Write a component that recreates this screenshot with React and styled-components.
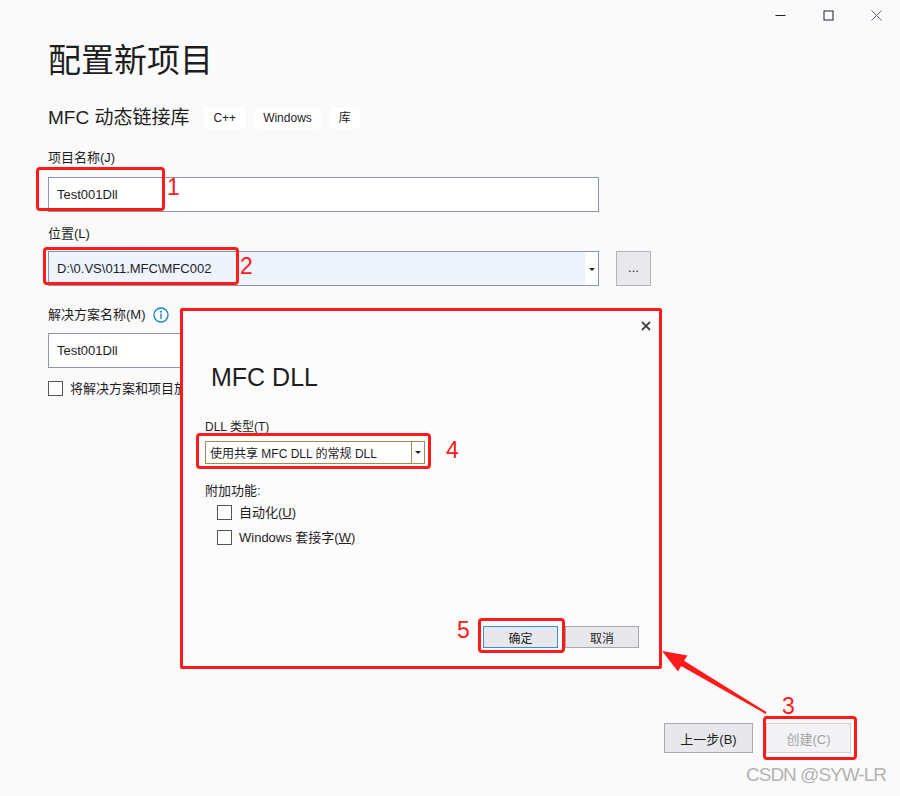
import styled, { createGlobalStyle } from "styled-components";

const GlobalStyle = createGlobalStyle`
  body {
    margin: 0;
    background: #fafafa;
    font-family: "Liberation Sans", "Noto Sans CJK SC", sans-serif;
  }
`;

const Window = styled.div`
  position: relative;
  width: 900px;
  height: 796px;
  overflow: hidden;
  display: flex;
  flex-direction: column;
  background: #fafafa;
  color: #1e1e1e;
`;

const TitleBar = styled.div`
  display: flex;
  justify-content: flex-end;
  height: 31px;
`;

const CtrlButton = styled.div`
  width: 48px;
  height: 31px;
  display: flex;
  align-items: center;
  justify-content: center;
  color: ${(p) => (p.$muted ? "#5a6276" : "#1b2235")};
`;

const Main = styled.main`
  flex: 1;
  padding-left: 48px;
  display: flex;
  flex-direction: column;
`;

const PageTitle = styled.h1`
  margin: 10px 0 0;
  font-size: 33px;
  line-height: 40px;
  font-weight: 400;
  color: #1e1e1e;
`;

const SubRow = styled.div`
  display: flex;
  align-items: center;
  gap: 9px;
  height: 22px;
  margin-top: 26px;
`;

const SubTitle = styled.span`
  font-size: 19px;
  line-height: 22px;
  margin-right: 6px;
`;

const Tag = styled.span`
  background: #fff;
  border-radius: 4px;
  font-size: 12px;
  height: 21px;
  line-height: 21px;
  padding: 0 9px;
  color: #1e1e1e;
`;

const Field = styled.div`
  display: flex;
  flex-direction: column;
  gap: ${(p) => p.$gap}px;
  margin-top: ${(p) => p.$top}px;
`;

const Label = styled.label`
  display: flex;
  align-items: center;
  gap: 7px;
  font-size: 13px;
  line-height: 18px;
  color: #1e1e1e;
`;

const TextBox = styled.div`
  width: 551px;
  height: 35px;
  box-sizing: border-box;
  border: 1px solid #8c95a8;
  background: #fff;
  display: flex;
  align-items: center;
  padding-left: 8px;
  font-size: 13px;
`;

const ComboRow = styled.div`
  display: flex;
  gap: 17px;
`;

const Combo = styled.div`
  width: 551px;
  height: 35px;
  box-sizing: border-box;
  border: 1px solid #8c95a8;
  display: flex;
`;

const ComboText = styled.div`
  flex: 1;
  background: #eef3fc;
  display: flex;
  align-items: center;
  padding-left: 8px;
  font-size: 13px;
`;

const DropArea = styled.div`
  width: 13px;
  background: #fff;
  display: flex;
  align-items: center;
  justify-content: center;
  padding-top: 2px;
`;

const Caret = styled.span`
  width: 0;
  height: 0;
  border-left: 3px solid transparent;
  border-right: 3px solid transparent;
  border-top: 3px solid #222;
`;

const BrowseButton = styled.div`
  width: 35px;
  height: 35px;
  box-sizing: border-box;
  border: 1px solid #b4b4b4;
  background: #e9e9ed;
  display: flex;
  align-items: center;
  justify-content: center;
  font-size: 13px;
  padding-bottom: 2px;
`;

const CheckRow = styled.div`
  display: flex;
  align-items: center;
  gap: 7px;
  font-size: 13px;
  line-height: 15px;
  margin-top: ${(p) => p.$top || 0}px;
  padding-left: ${(p) => p.$indent || 0}px;
`;

/* the part of this label that the dialog hides is clipped */
const ClippedText = styled.span`
  width: 110px;
  overflow: hidden;
  white-space: nowrap;
`;

const Box = styled.span`
  width: 15px;
  height: 15px;
  box-sizing: border-box;
  border: 1px solid #555;
  background: #fff;
  flex-shrink: 0;
`;

const Footer = styled.footer`
  display: flex;
  justify-content: flex-end;
  gap: 13px;
  padding: 0 49px 43px 0;
`;

const Button = styled.div`
  width: ${(p) => p.$w}px;
  height: ${(p) => p.$h}px;
  box-sizing: border-box;
  border: 1px solid ${(p) => (p.$primary ? "#3c8ce6" : p.$disabled ? "#cfcfd4" : "#a9a9ad")};
  background: ${(p) => (p.$disabled ? "#f3f3f5" : "#e8e8ec")};
  color: ${(p) => (p.$disabled ? "#a2a2a2" : "#1e1e1e")};
  display: flex;
  align-items: center;
  justify-content: center;
  font-size: ${(p) => p.$size || 13}px;
`;

/* modal dialog laid over the page */
const Dialog = styled.div`
  position: absolute;
  left: 180px;
  top: 308px;
  width: 482px;
  height: 361px;
  box-sizing: border-box;
  border: 3px solid #ff1a1a;
  border-radius: 2px;
  background: #fcfcfc;
  display: flex;
  flex-direction: column;
  padding: 0 20px 18px 22px;
`;

const DialogHeader = styled.div`
  display: flex;
  justify-content: flex-end;
  margin: 10px -12px 0 0;
  height: 12px;
`;

const DialogTitle = styled.h2`
  margin: 29px 0 0 6px;
  font-size: 25px;
  line-height: 30px;
  font-weight: 400;
  color: #1e1e1e;
`;

const SmallLabel = styled.div`
  font-size: ${(p) => p.$size || 12}px;
  line-height: 16px;
  margin-top: ${(p) => p.$top}px;
  color: #1e1e1e;
`;

const Select = styled.div`
  width: 220px;
  height: 23px;
  margin-top: 6px;
  box-sizing: border-box;
  border: 1px solid #a48a52;
  background: #fff;
  display: flex;
`;

const SelectText = styled.div`
  flex: 1;
  display: flex;
  align-items: center;
  padding-left: 4px;
  font-size: 12px;
`;

const SelectDrop = styled.div`
  width: 12px;
  border-left: 1px solid #a48a52;
  display: flex;
  align-items: center;
  justify-content: center;
`;

const DialogFooter = styled.div`
  margin-top: auto;
  display: flex;
  justify-content: flex-end;
  gap: 7px;
`;

const Underline = styled.span`
  text-decoration: underline;
`;

/* red annotations drawn over the screenshot */
const Mark = styled.div`
  position: absolute;
  left: ${(p) => p.$x}px;
  top: ${(p) => p.$y}px;
  width: ${(p) => p.$w}px;
  height: ${(p) => p.$h}px;
  box-sizing: border-box;
  border: 3px solid #ff1a1a;
  border-radius: 4px;
  pointer-events: none;
`;

const Num = styled.span`
  position: absolute;
  left: ${(p) => p.$x}px;
  top: ${(p) => p.$y}px;
  color: #ff1a1a;
  font-family: "Liberation Sans", sans-serif;
  font-size: 23px;
  line-height: 23px;
`;

const Overlay = styled.svg`
  position: absolute;
  left: 0;
  top: 0;
  pointer-events: none;
`;

const Watermark = styled.span`
  position: absolute;
  left: 746px;
  top: 764px;
  font-family: "Liberation Sans", sans-serif;
  font-size: 19px;
  line-height: 22px;
  letter-spacing: -1px;
  color: #b3b3b3;
  white-space: nowrap;
`;

const InfoIcon = () => (
  <svg width="16" height="16" viewBox="0 0 16 16">
    <circle cx="8" cy="8" r="7" fill="none" stroke="#1c7fd6" strokeWidth="1.3" />
    <circle cx="8" cy="4.7" r="1" fill="#1c7fd6" />
    <rect x="7.3" y="6.6" width="1.4" height="5.2" fill="#1c7fd6" />
  </svg>
);

export default function App() {
  return (
    <>
      <GlobalStyle />
      <Window>
        <TitleBar>
          <CtrlButton>
            <svg width="11" height="11" viewBox="0 0 11 11">
              <path d="M0.5 5.5h10" stroke="currentColor" strokeWidth="1" />
            </svg>
          </CtrlButton>
          <CtrlButton>
            <svg width="11" height="11" viewBox="0 0 11 11">
              <rect x="1" y="1" width="9" height="9" fill="none" stroke="currentColor" strokeWidth="1" />
            </svg>
          </CtrlButton>
          <CtrlButton $muted>
            <svg width="11" height="11" viewBox="0 0 11 11">
              <path d="M0.5 0.5l10 10M10.5 0.5l-10 10" stroke="currentColor" strokeWidth="1" />
            </svg>
          </CtrlButton>
        </TitleBar>

        <Main>
          <PageTitle>配置新项目</PageTitle>
          <SubRow>
            <SubTitle>MFC 动态链接库</SubTitle>
            <Tag>C++</Tag>
            <Tag>Windows</Tag>
            <Tag>库</Tag>
          </SubRow>

          <Field $top={20} $gap={10}>
            <Label>项目名称(J)</Label>
            <TextBox>Test001Dll</TextBox>
          </Field>

          <Field $top={13} $gap={8}>
            <Label>位置(L)</Label>
            <ComboRow>
              <Combo>
                <ComboText>D:\0.VS\011.MFC\MFC002</ComboText>
                <DropArea>
                  <Caret />
                </DropArea>
              </Combo>
              <BrowseButton>...</BrowseButton>
            </ComboRow>
          </Field>

          <Field $top={20} $gap={9}>
            <Label>
              解决方案名称(M) <InfoIcon />
            </Label>
            <TextBox>Test001Dll</TextBox>
          </Field>

          <CheckRow $top={13}>
            <Box />
            <ClippedText>将解决方案和项目放在同一目录中</ClippedText>
          </CheckRow>
        </Main>

        <Footer>
          <Button $w={89} $h={30}>上一步(B)</Button>
          <Button $w={85} $h={30} $disabled>创建(C)</Button>
        </Footer>

        <Dialog>
          <DialogHeader>
            <svg width="10" height="10" viewBox="0 0 10 10">
              <path d="M1 1l8 8M9 1l-8 8" stroke="#444" strokeWidth="1.8" />
            </svg>
          </DialogHeader>
          <DialogTitle>MFC DLL</DialogTitle>
          <SmallLabel $top={27}>DLL 类型(T)</SmallLabel>
          <Select>
            <SelectText>使用共享 MFC DLL 的常规 DLL</SelectText>
            <SelectDrop>
              <Caret />
            </SelectDrop>
          </Select>
          <SmallLabel $top={19} $size={13}>附加功能:</SmallLabel>
          <CheckRow $top={6} $indent={12}>
            <Box />
            <span>
              自动化(<Underline>U</Underline>)
            </span>
          </CheckRow>
          <CheckRow $top={10} $indent={12}>
            <Box />
            <span>
              Windows 套接字(<Underline>W</Underline>)
            </span>
          </CheckRow>
          <DialogFooter>
            <Button $w={75} $h={22} $size={12} $primary>确定</Button>
            <Button $w={74} $h={22} $size={12}>取消</Button>
          </DialogFooter>
        </Dialog>

        <Mark $x={36} $y={167} $w={129} $h={44} />
        <Mark $x={43} $y={247} $w={196} $h={38} />
        <Mark $x={196} $y={433} $w={235} $h={36} />
        <Mark $x={478} $y={618} $w={87} $h={35} />
        <Mark $x={763} $y={716} $w={94} $h={44} />

        <Num $x={167} $y={176}>1</Num>
        <Num $x={240} $y={255}>2</Num>
        <Num $x={782} $y={695}>3</Num>
        <Num $x={446} $y={439}>4</Num>
        <Num $x={457} $y={619}>5</Num>

        <Overlay width="900" height="796" viewBox="0 0 900 796">
          <polygon
            fill="#ff1a1a"
            points="662,651 687.5,655.5 684.1,660.7 766.5,712.1 765.5,713.9 681.1,665.9 678,671.5"
          />
        </Overlay>

        <Watermark>CSDN @SYW-LR</Watermark>
      </Window>
    </>
  );
}
